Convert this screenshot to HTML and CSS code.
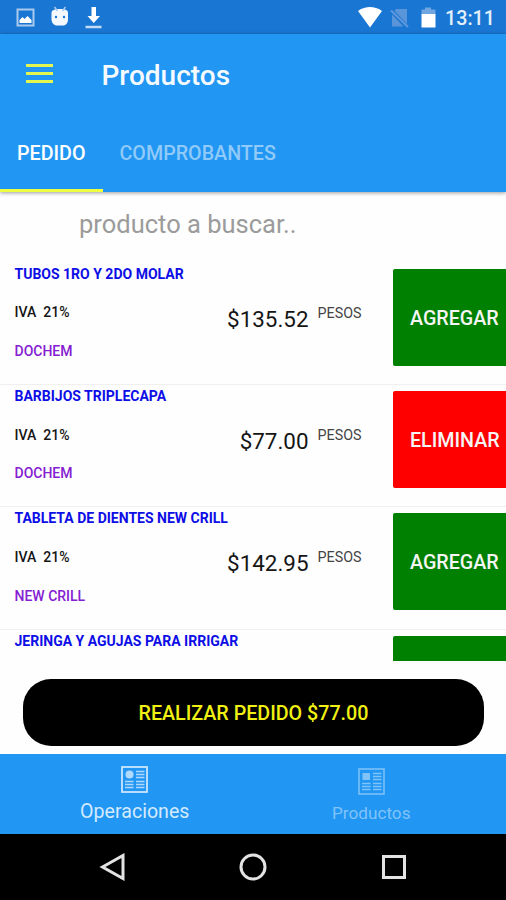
FILE: index.html
```html
<!DOCTYPE html>
<html lang="es">
<head>
    <meta charset="UTF-8">
    <meta name="viewport" content="width=device-width, initial-scale=1.0">
    <title>Productos</title>
    <link rel="stylesheet" href="styles.css">
</head>
<body>

    <div class="status-bar">
        <svg width="90" height="34" viewBox="0 0 90 34">
            <rect x="1.500" y="9.500" width="16" height="16" fill="none" stroke="#a9caee" stroke-width="2"/>
            <path d="M3.500 23v-3l3-3 2 2 3-3 4 4v3z" fill="#fff"/>
            <path d="M35.500 13c0-3 3-4 8.500-4s8 1 8 4v6c0 4-2 6.500-5 6.500h-6c-3 0-5.500-2.500-5.500-6.500z" fill="#f4f9ff"/>
            <path d="M38.500 7l3 4M49.500 7l-3 4" stroke="#a9caee" stroke-width="1.500"/>
            <circle cx="40" cy="17" r="1.200" fill="#1976d2"/>
            <circle cx="48" cy="17" r="1.200" fill="#1976d2"/>
            <path d="M75.500 7h4.500v9h4l-6.250 7-6.250-7h4z" fill="#fff"/>
            <path d="M69.500 27h16" stroke="#c3daf3" stroke-width="2.500"/>
        </svg>
        <svg class="status-right" width="80" height="34" viewBox="0 0 80 34">
            <path d="M0 11C4 8 8 7 12 7s8 1 12 4L12 27.500z" fill="#fff"/>
            <path d="M38 9h11v15L36.500 11zM34 14.500L45.500 26.500H34z" fill="#5a95da"/>
            <path d="M33 10.500L50 27" stroke="#6198db" stroke-width="2"/>
            <path d="M63.500 14V9.500h3.500V7.500h6v2H77.500V14z" fill="#6fa6e0"/>
            <path d="M63.500 14h14v13.500h-14z" fill="#fff"/>
        </svg>
        <span class="clock">13:11</span>
    </div>

    <header class="header">
        <div class="toolbar">
            <div class="menu-icon"><span></span><span></span><span></span></div>
            <h1>Productos</h1>
        </div>
        <div class="tabs">
            <div class="tab active">PEDIDO</div>
            <div class="tab">COMPROBANTES</div>
        </div>
    </header>

    <div class="search">producto a buscar..</div>

    <main class="list">
        <div class="item">
            <div class="info">
                <p class="name">TUBOS 1RO Y 2DO MOLAR</p>
                <p class="iva">IVA&nbsp; 21%</p>
                <p class="brand">DOCHEM</p>
            </div>
            <div class="price">$135.52</div>
            <div class="currency">PESOS</div>
            <div class="btn add">AGREGAR</div>
        </div>
        <div class="item">
            <div class="info">
                <p class="name">BARBIJOS TRIPLECAPA</p>
                <p class="iva">IVA&nbsp; 21%</p>
                <p class="brand">DOCHEM</p>
            </div>
            <div class="price">$77.00</div>
            <div class="currency">PESOS</div>
            <div class="btn remove">ELIMINAR</div>
        </div>
        <div class="item">
            <div class="info">
                <p class="name">TABLETA DE DIENTES NEW CRILL</p>
                <p class="iva">IVA&nbsp; 21%</p>
                <p class="brand">NEW CRILL</p>
            </div>
            <div class="price">$142.95</div>
            <div class="currency">PESOS</div>
            <div class="btn add">AGREGAR</div>
        </div>
        <div class="item">
            <div class="info">
                <p class="name">JERINGA Y AGUJAS PARA IRRIGAR</p>
            </div>
            <div class="btn add"></div>
        </div>
    </main>

    <div class="order">
        <div class="order-btn">REALIZAR PEDIDO $77.00</div>
    </div>

    <nav class="bottom-nav">
        <div class="nav-item selected">
            <svg width="27" height="27" viewBox="0 0 27 27">
                <rect x="1" y="1" width="25" height="25" fill="none" stroke="currentColor" stroke-width="1.700"/>
                <circle cx="8.500" cy="8.500" r="4" fill="currentColor" opacity="0.8"/>
                <path d="M15 5.500h8.500M15 8.500h8.500M15 11.500h8.500M4 15.500h8.500M4 18.500h8.500M4 21.500h8.500M15 15.500h8.500M15 18.500h8.500M15 21.500h8.500" stroke="currentColor" stroke-width="1.700" opacity="0.8"/>
            </svg>
            <span>Operaciones</span>
        </div>
        <div class="nav-item">
            <svg width="27" height="27" viewBox="0 0 27 27">
                <rect x="1" y="1" width="25" height="25" fill="none" stroke="currentColor" stroke-width="1.500"/>
                <rect x="4.500" y="5" width="7.500" height="7" fill="currentColor"/>
                <path d="M15 5.500h8.500M15 8.500h8.500M15 11.500h8.500M4 15.500h8.500M4 18.500h8.500M4 21.500h8.500M15 15.500h8.500M15 18.500h8.500M15 21.500h8.500" stroke="currentColor" stroke-width="1.500"/>
            </svg>
            <span>Productos</span>
        </div>
    </nav>

    <div class="system-nav">
        <svg width="28" height="28" viewBox="0 0 28 28">
            <path d="M3.500 14L24 2.500v23z"/>
        </svg>
        <svg width="28" height="28" viewBox="0 0 28 28">
            <circle cx="14" cy="14" r="12"/>
        </svg>
        <svg width="28" height="28" viewBox="0 0 28 28">
            <rect x="3.500" y="3.500" width="21" height="21"/>
        </svg>
    </div>

</body>
</html>
```
FILE: styles.css
```css
* {
    box-sizing: border-box;
}
body {
    font-family: Roboto, sans-serif;
    margin: 0;
    height: 900px;
    display: flex;
    flex-direction: column;
    overflow: hidden;
    background-color: #fefefe;
    white-space: nowrap;
}
h1, p {
    margin: 0;
}
svg {
    display: block;
    flex: none;
}
.status-bar {
    height: 34px;
    flex: none;
    display: flex;
    padding: 0 12px 0 16px;
    background-color: #1976d2;
}
.status-right {
    margin-left: auto;
}
.clock {
    width: 49px;
    margin-left: 7px;
    font-size: 19.7px;
    font-weight: 500;
    line-height: 37px;
    color: #e3effb;
}
.header {
    position: relative;
    z-index: 1;
    height: 157.5px;
    flex: none;
    background-color: #2196f3;
    box-shadow: 0 1px 4px rgba(0, 0, 0, 0.4);
}
.toolbar {
    display: flex;
    align-items: center;
    height: 82px;
    padding-left: 26px;
}
.menu-icon {
    display: flex;
    flex-direction: column;
    gap: 5px;
    width: 27px;
    margin-top: -4px;
}
.menu-icon span {
    height: 3px;
    background-color: #e4f650;
}
h1 {
    margin-left: 48.5px;
    font-size: 28px;
    font-weight: 500;
    color: #f5faff;
}
.tabs {
    display: flex;
    height: 75.5px;
}
.tab {
    padding: 0 17px;
    font-size: 19.7px;
    font-weight: 500;
    line-height: 76px;
    color: #90caf9;
}
.tab.active {
    width: 102.5px;
    color: #fff;
    border-bottom: 3.5px solid #eeff41;
}
.search {
    height: 70px;
    flex: none;
    padding-left: 79px;
    font-size: 25.5px;
    line-height: 65px;
    color: #9b9b9b;
}
.list {
    height: 399.5px;
    flex: none;
    overflow: hidden;
}
.item {
    display: flex;
    height: 122.4px;
    padding-left: 14.5px;
    /* divider sits at the top of each row */
    border-top: 1px solid #f0f0f0;
}
.item:first-child {
    border-top-color: transparent;
}
.info {
    width: 190px;
    font-size: 14px;
    font-weight: 500;
}
.info p {
    height: 38.7px;
    line-height: 22px;
}
.name {
    font-weight: 700;
    color: #0d0de6;
}
.iva {
    color: #151515;
}
.brand {
    color: #8420d2;
}
.price {
    width: 104px;
    text-align: right;
    font-size: 22.4px;
    line-height: 112px;
    color: #151515;
}
.currency {
    width: 84px;
    padding-left: 9px;
    font-size: 14.3px;
    line-height: 101px;
    color: #444;
}
.btn {
    width: 123px;
    height: 97px;
    margin: 6px -10px 0 auto;
    padding-left: 17px;
    border-radius: 2px;
    font-size: 19.7px;
    font-weight: 500;
    line-height: 99px;
    color: #f5f5f5;
}
.add {
    background-color: #008000;
}
.remove {
    background-color: #f00;
}
.order {
    height: 93px;
    flex: none;
    padding: 17.5px 22px 8.5px 23px;
}
.order-btn {
    height: 67px;
    border-radius: 28px;
    background-color: #000;
    color: #f0f012;
    font-size: 19.7px;
    font-weight: 500;
    line-height: 69px;
    text-align: center;
}
.bottom-nav {
    display: flex;
    height: 79.5px;
    flex: none;
    padding: 0 16.5px;
    background-color: #2196f3;
}
.nav-item {
    display: flex;
    flex-direction: column;
    align-items: center;
    width: 50%;
    padding-top: 14px;
    font-size: 17.2px;
    color: #80c3f9;
}
.nav-item span {
    line-height: 24px;
    margin-top: 6px;
}
.nav-item.selected {
    padding-top: 12px;
    font-size: 19.6px;
    color: #d3eaff;
}
.nav-item.selected span {
    margin-top: 7px;
}
.system-nav {
    display: flex;
    flex: 1;
    align-items: center;
    justify-content: center;
    gap: 112.5px;
    background-color: #000;
}
.system-nav svg {
    fill: none;
    stroke: #e3e3e3;
    stroke-width: 3;
}
```
